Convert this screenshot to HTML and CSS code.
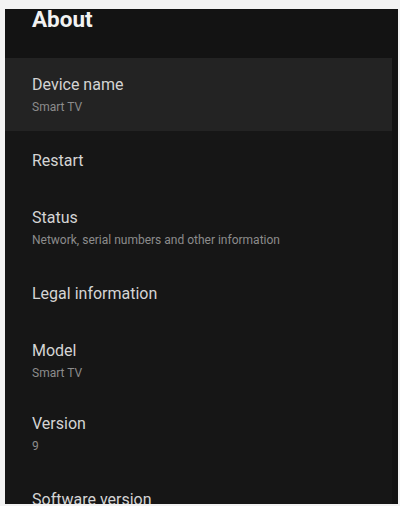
FILE: index.html
```html
<!DOCTYPE html>
<html lang="en">
<head>
  <meta charset="UTF-8">
  <meta name="viewport" content="width=device-width, initial-scale=1.0">
  <title>About</title>
  <link rel="stylesheet" href="styles.css">
</head>
<body>
  <div class="screen">
    <div class="header">
      <h1>About</h1>
    </div>

    <ul class="menu">
      <li class="item two selected">
        <span class="title">Device name</span>
        <span class="sub">Smart TV</span>
      </li>
      <li class="item">
        <span class="title">Restart</span>
      </li>
      <li class="item two">
        <span class="title">Status</span>
        <span class="sub">Network, serial numbers and other information</span>
      </li>
      <li class="item">
        <span class="title">Legal information</span>
      </li>
      <li class="item two">
        <span class="title">Model</span>
        <span class="sub">Smart TV</span>
      </li>
      <li class="item two">
        <span class="title">Version</span>
        <span class="sub">9</span>
      </li>
      <li class="item">
        <span class="title">Software version</span>
      </li>
    </ul>
  </div>
</body>
</html>
```

FILE: styles.css
```css
html, body {
  margin: 0;
  padding: 0;
  height: 100%;
}

body {
  background: #f3f3f3;
  font-family: Roboto, "Noto Sans", sans-serif;
  overflow: hidden;
}

.screen {
  margin: 9px 2px 0 5px;
  height: 495px;
  background: #161616;
  border-right: 6px solid #121212;
  overflow: hidden;
}

.header {
  height: 49px;
  background: #131313;
  padding-left: 27px;
}

h1 {
  margin: 0;
  padding-top: 1px;
  font-size: 22.5px;
  line-height: 18px;
  font-weight: 700;
  color: #f2f2f2;
}

.menu {
  list-style: none;
  margin: 0;
  padding: 0;
}

.item {
  height: 60px;
  padding-left: 27px;
  display: flex;
  flex-direction: column;
  justify-content: center;
  box-sizing: border-box;
}

.item.two {
  height: 73px;
  padding-top: 1px;
}

.item.selected {
  background: #232323;
}

.title {
  font-size: 16px;
  line-height: 20px;
  color: #d4d4d4;
}

.sub {
  margin-top: 4px;
  font-size: 12px;
  line-height: 16px;
  color: #8c8c8c;
}
```
